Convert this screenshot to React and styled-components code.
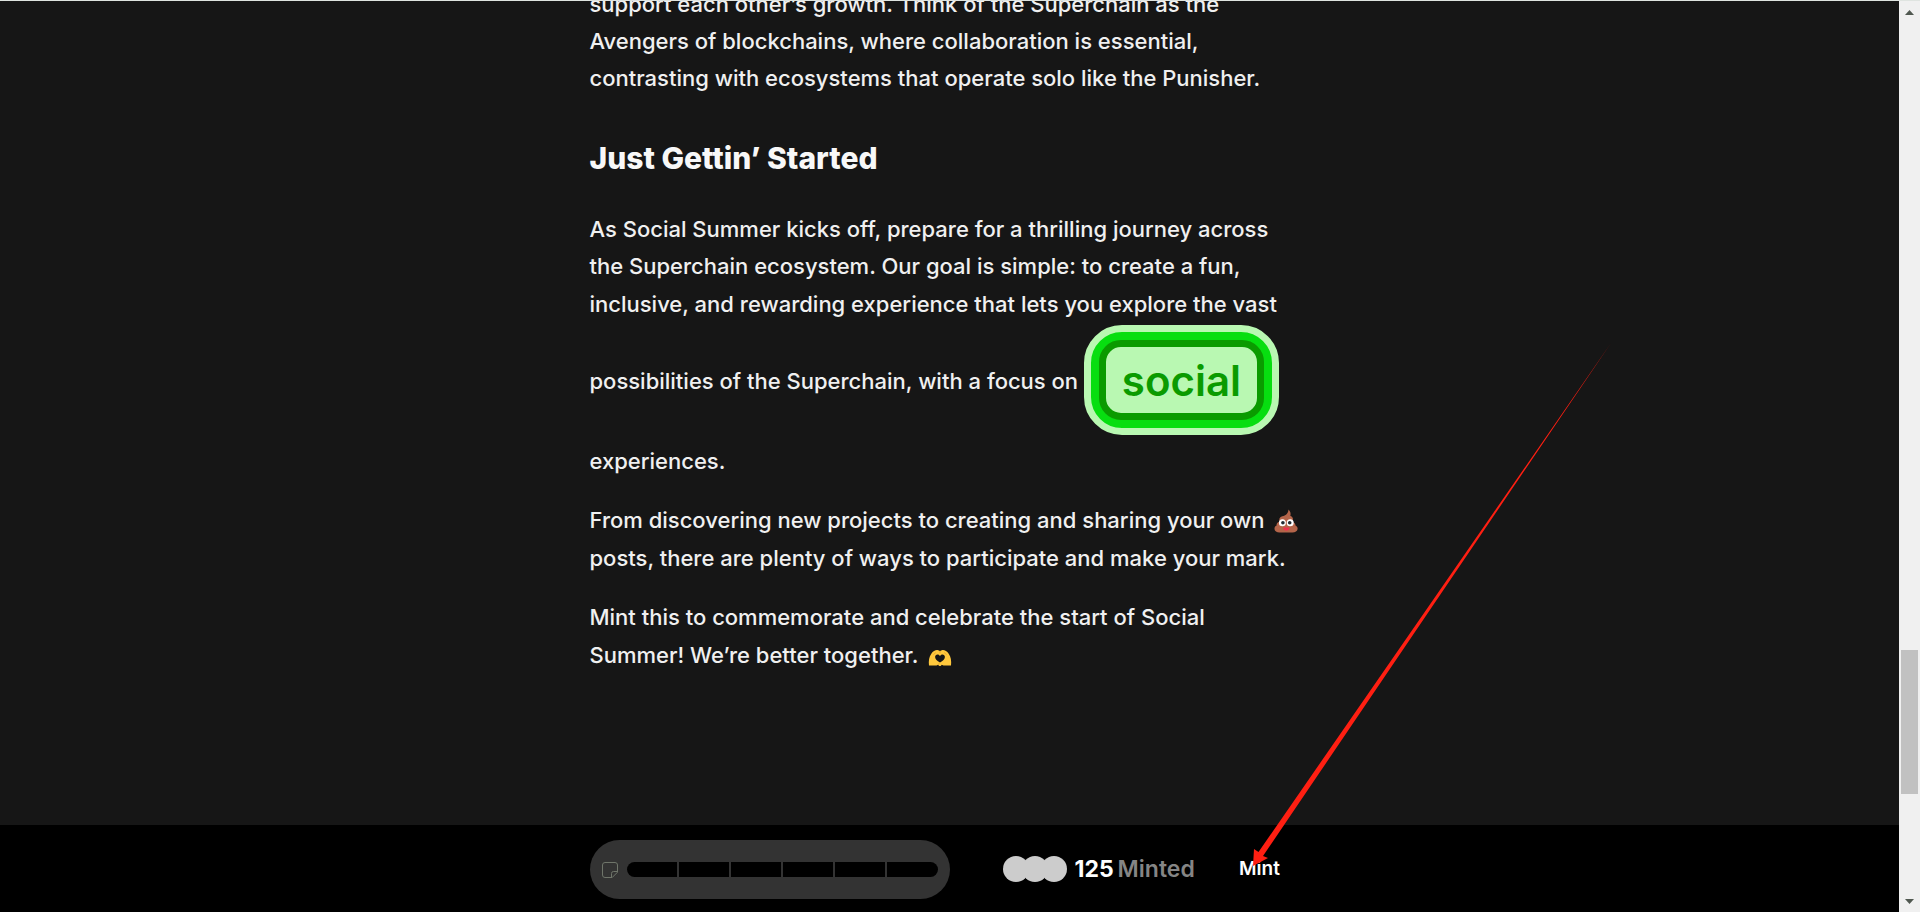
import styled, { createGlobalStyle } from "styled-components";

const segments = [1, 2, 3, 4, 5, 6];
const minters = [1, 2, 3];

function PoopEmoji() {
  return (
    <Emoji viewBox="0 0 24 24" role="img" aria-label="Pile of poo">
      <path fill="#b4654a" d="M14.5 0.5c1.9 1.8 2.6 4.3 1.8 6.2 2 .9 3 2.500 2.600 4.600-.1.600-.3 1.100-.6 1.600 2.100.5 3.300 1.900 3.200 3.600 1.600.7 2.300 2 2.100 3.600C23.300 22.400 21.300 23.500 18.500 23.500h-13C2.700 23.500.6 22.300.5 20c-.1-1.700.7-2.900 2.100-3.500-.3-2 .9-3.600 3-3.800-1-2.300.1-4.700 2.700-5.400C11.600 6.400 14.200 4.800 14.500.5z" />
      <circle cx="8.400" cy="13.700" r="3.500" fill="#fff" />
      <circle cx="16.200" cy="13.700" r="3.500" fill="#fff" />
      <circle cx="8.900" cy="13.700" r="1.800" fill="#1e2a33" />
      <circle cx="15.700" cy="13.700" r="1.800" fill="#1e2a33" />
      <path fill="#f0304f" d="M9.600 18.600h5.400c.4 0 .6.4.4.8-.6 1.300-1.700 2.200-3.100 2.200s-2.500-.9-3.100-2.200c-.2-.4 0-.8.4-.8z" />
    </Emoji>
  );
}

function HeartHandsEmoji() {
  return (
    <Emoji viewBox="0 0 24 24" role="img" aria-label="Heart hands">
      <path fill="#ffc83d" d="M1 21.500c-.6-4.600.1-8.800 2.300-11.800C5.200 7 7.600 5.800 10 6.200c.8.100 1.500.5 2 1 .5-.5 1.200-.9 2-1 2.400-.4 4.800.8 6.700 3.500 2.200 3 2.900 7.200 2.300 11.800h-7.500l-1.800-.8c-.4.900-1 1.400-1.700 1.400-.8 0-1.400-.5-1.800-1.400l-1.700.8z" />
      <path fill="#161616" d="M12 18.400c-2.900-1.700-4.900-3.400-4.900-5.500 0-1.500 1.100-2.500 2.400-2.500 1.100 0 2 .6 2.500 1.500.5-.9 1.400-1.500 2.500-1.500 1.300 0 2.400 1 2.400 2.500 0 2.100-2 3.800-4.900 5.500z" />
      <path fill="none" stroke="#e09a1f" strokeWidth="0.700" d="M12 7.200v2.200M5.500 10.500l2.300-1.900M18.500 10.500l-2.300-1.900M12 18.400l-2 2.300" />
    </Emoji>
  );
}

function NoteIcon() {
  return (
    <Note viewBox="0 0 16 16" aria-hidden="true">
      <path d="M3 .5h10A2.500 2.500 0 0 1 15.500 3v7.200L10.200 15.500H3A2.500 2.500 0 0 1 .5 13V3A2.500 2.500 0 0 1 3 .5z" />
      <path d="M9.500 15.200V11.500a2 2 0 0 1 2-2h3.700" />
    </Note>
  );
}

function Scrollbar() {
  return (
    <ScrollTrack aria-hidden="true">
      <ScrollArrow viewBox="0 0 9 5"><path d="M4.500 0L9 5H0z" /></ScrollArrow>
      <ScrollSpace $grow={635} />
      <ScrollThumb />
      <ScrollSpace $grow={105} />
      <ScrollArrow viewBox="0 0 9 5"><path d="M0 0h9L4.500 5z" /></ScrollArrow>
    </ScrollTrack>
  );
}

function App() {
  return (
    <Page>
      <GlobalStyle />
      <Main>
        <ArticleArea>
          <Article>
            <p>
              support each other’s growth. Think of the Superchain as the
              Avengers of blockchains, where collaboration is essential,
              contrasting with ecosystems that operate solo like the Punisher.
            </p>
            <h2>Just Gettin’ Started</h2>
            <p>
              As Social Summer kicks off, prepare for a thrilling journey across
              the Superchain ecosystem. Our goal is simple: to create a fun,
              inclusive, and rewarding experience that lets you explore the vast
              possibilities of the Superchain, with a focus on{" "}
              <SocialBadge><SocialLabel>social</SocialLabel></SocialBadge>{" "}
              experiences.
            </p>
            <p>
              From discovering new projects to creating and sharing your own{" "}
              <PoopEmoji /> posts, there are plenty of ways to participate and make your mark.
            </p>
            <p>
              Mint this to commemorate and celebrate the start of Social
              Summer! We’re better together. <HeartHandsEmoji />
            </p>
          </Article>
        </ArticleArea>
        <MintBar>
          <MintBarInner>
            <Progress>
              <NoteIcon />
              <ProgressTrack>
                {segments.map(s => <Segment key={s} />)}
              </ProgressTrack>
            </Progress>
            <Minted>
              <Avatars>
                {minters.map(m => <Avatar key={m} />)}
              </Avatars>
              <strong>125</strong>
              <MintedLabel>Minted</MintedLabel>
            </Minted>
            <MintButton type="button">Mint</MintButton>
          </MintBarInner>
        </MintBar>
      </Main>
      <Scrollbar />
      <Pointer viewBox="0 0 360 526" aria-hidden="true">
        <path d="M359 0L6.500 509 2 506 1 523 16 515 11 513z" />
      </Pointer>
    </Page>
  );
}

export default App

const GlobalStyle = createGlobalStyle`
  * {
    box-sizing: border-box;
  }

  body {
    margin: 0;
    background: #161616;
    color: #f0f0f0;
    font-family: Inter, "Liberation Sans", sans-serif;
  }
`;

const Page = styled.div`
  position: relative;
  display: flex;
  height: 100vh;
  border-top: 1px solid #dfe4e0;
  overflow: hidden;
`;

const Main = styled.main`
  flex: 1;
  min-width: 0;
  display: flex;
  flex-direction: column;
`;

const ArticleArea = styled.div`
  flex: 1;
  min-height: 0;
  display: flex;
  flex-direction: column;
  justify-content: flex-end;
  overflow: hidden;
`;

const Article = styled.article`
  width: 100%;
  max-width: 720px;
  margin: 0 auto;
  padding: 0 8px 151px 0;
  font-size: 22px;
  font-weight: 500;
  line-height: 1.7;

  p {
    margin: 0 0 22px;
  }

  p:last-child {
    margin-bottom: 0;
  }

  h2 {
    margin: 40px 0 33px;
    color: #f8f8f8;
    font-size: 30px;
    font-weight: 800;
    line-height: 40px;
  }
`;

const SocialBadge = styled.span`
  display: inline-flex;
  width: 195px;
  height: 110px;
  margin: 2px 0 8px;
  vertical-align: middle;
  border-radius: 38px;
  border: 7px solid #b9f8b2;
  background: #07de10;
  padding: 8px;
`;

const SocialLabel = styled.span`
  flex: 1;
  display: flex;
  align-items: center;
  justify-content: center;
  padding-top: 2px;
  border: 7px solid #0a9b00;
  border-radius: 22px;
  background: #b9f8b2;
  color: #0a9b00;
  font-size: 42px;
  font-weight: 600;
  line-height: 1;
`;

const Emoji = styled.svg`
  width: 24px;
  height: 24px;
  margin-left: 4px;
  vertical-align: -5px;
`;

const MintBar = styled.footer`
  padding: 15px 0 13px;
  background: #000;
`;

const MintBarInner = styled.div`
  display: flex;
  align-items: center;
  width: 100%;
  max-width: 720px;
  margin: 0 auto;
`;

const Progress = styled.div`
  flex: none;
  display: flex;
  align-items: center;
  gap: 9px;
  width: 360px;
  height: 59px;
  padding: 0 12px;
  border-radius: 30px;
  background: #333;
`;

const Note = styled.svg`
  flex: none;
  width: 16px;
  height: 16px;
  fill: none;
  stroke: #6f756a;
`;

const ProgressTrack = styled.div`
  flex: 1;
  display: flex;
  gap: 2px;
  height: 15px;
  border-radius: 8px;
  overflow: hidden;
`;

const Segment = styled.span`
  flex: 1;
  background: #000;
`;

const Minted = styled.div`
  display: flex;
  align-items: center;
  gap: 4px;
  margin-left: 53px;
  padding-bottom: 2px;
  color: #fff;
  font-size: 23px;
  font-weight: 600;
  line-height: 28px;

  strong {
    margin-left: 4px;
    font-weight: 700;
  }
`;

const Avatars = styled.div`
  display: flex;
`;

const Avatar = styled.span`
  width: 26px;
  height: 26px;
  border-radius: 50%;
  background: #ccc;

  & + & {
    margin-left: -7px;
  }
`;

const MintedLabel = styled.span`
  color: #858585;
`;

const MintButton = styled.button`
  width: 100px;
  margin-left: auto;
  padding: 14px 0 16px;
  border: 0;
  background: none;
  color: #fff;
  font: inherit;
  font-size: 19px;
  font-weight: 600;
  line-height: 28px;
  cursor: pointer;
`;

const ScrollTrack = styled.div`
  flex: none;
  display: flex;
  flex-direction: column;
  align-items: center;
  width: 21px;
  padding: 9px 2px 8px;
  background: #f0f0f0;
`;

const ScrollArrow = styled.svg`
  flex: none;
  width: 9px;
  height: 5px;
  fill: #505850;
`;

const ScrollSpace = styled.div`
  flex: ${props => props.$grow};
`;

const ScrollThumb = styled.div`
  flex: none;
  width: 17px;
  height: 144px;
  background: #c1c1c1;
`;

const Pointer = styled.svg`
  position: absolute;
  right: 308px;
  bottom: 43px;
  width: 360px;
  height: 526px;
  fill: #ff1f12;
  pointer-events: none;
`;
